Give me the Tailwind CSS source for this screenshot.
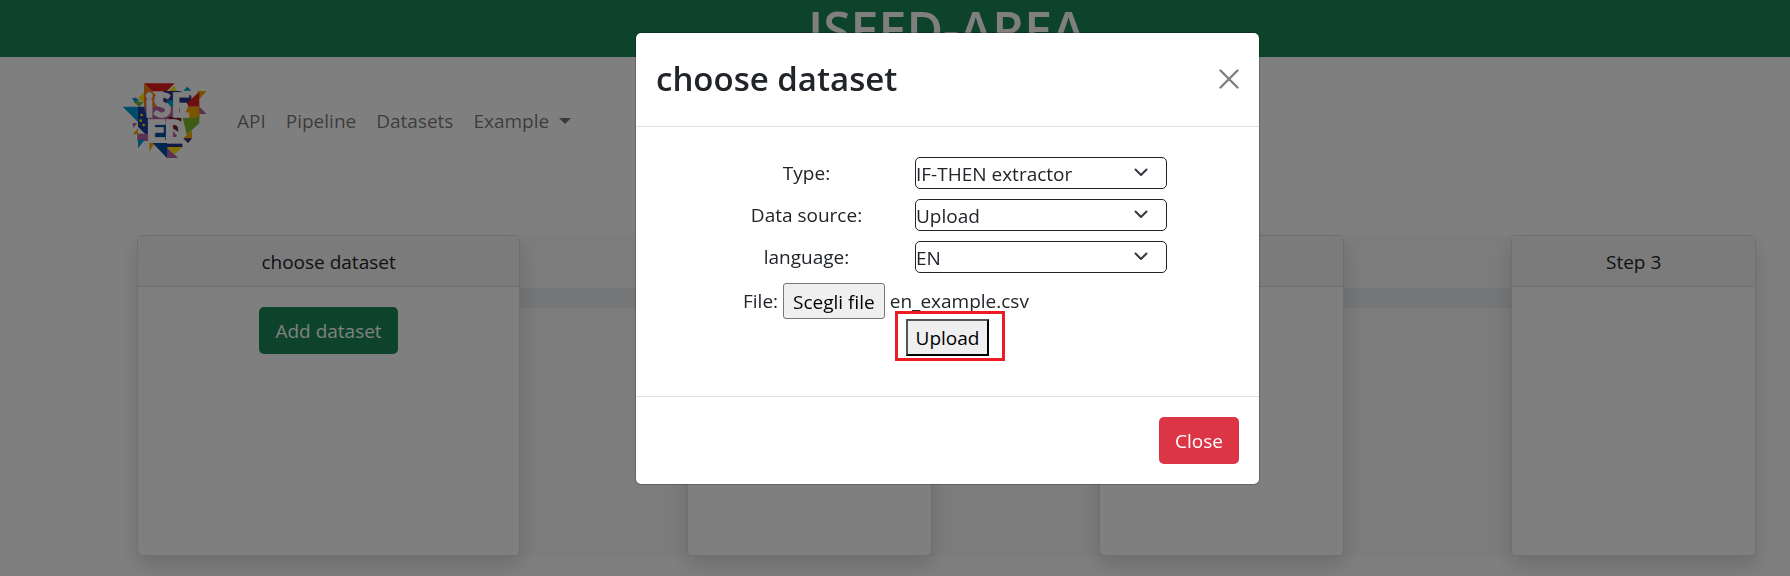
<!DOCTYPE html>
<html lang="en">
<head>
<meta charset="utf-8">
<meta name="viewport" content="width=device-width, initial-scale=1">
<title>ISEED-AREA</title>
<script src="https://cdn.jsdelivr.net/npm/@tailwindcss/browser@4"></script>
</head>
<body class="min-h-screen overflow-hidden bg-white font-['Open_Sans','Noto_Sans',sans-serif] text-[19px] leading-[30px] text-[#212529]">

<header class="h-[57px] overflow-hidden bg-[#198754] pl-[103px] text-center">
  <h1 class="text-[50px] leading-[58px] font-semibold text-white">ISEED-AREA</h1>
</header>

<nav class="flex items-center pt-[22px] pl-[122px] text-black/55" aria-label="Main">
  <a href="#" aria-label="iSEED home" class="mr-[30px] block">
    <svg class="h-[84px] w-[85px]" viewBox="66 56 255 252" aria-hidden="true">
      <path fill="#e71d1d" d="M132 69h92l-24 24h-44z"/>
      <path fill="#f08019" d="M132 69v70h46v-24z"/>
      <path fill="#ffe600" d="M224 76l-24 22 32 6z"/>
      <path fill="#0099d8" d="M262 79l12 12h-24zM96 114l12-2 10 10-14 4z"/>
      <path fill="#b9609f" d="M220 96l10-6v6z"/>
      <path fill="#2b3086" d="M190 92h48l36 14v26h-84z"/>
      <path fill="#f5aa00" d="M292 92h28l-22 24z"/>
      <path fill="#e0201b" d="M298 94v45h-34v-14z"/>
      <path fill="#ffe600" d="M132 96v30l-18-12z"/>
      <path fill="#7cb92b" d="M100 124h32l-14 16z"/>
      <path fill="#0099d8" d="M68 139h46v46zM200 120h40v30h-40z"/>
      <path fill="#1d3b94" d="M114 139h30v90l-30-30z"/>
      <path fill="#b9609f" d="M130 139h110v46H150zM298 139l22 22h-30z"/>
      <path fill="#f5aa00" d="M264 139h34v34h-50z"/>
      <path fill="#7cb92b" d="M298 163v26l-38 34-12-50h38z"/>
      <path fill="#7a1a2b" d="M206 170h38v50l-38-24z"/>
      <path fill="#b9609f" d="M206 196l30 36h-30zM98 188h14l-12 14zM112 220h36v22h-36z"/>
      <path fill="#f5aa00" d="M98 222l16-18v18zM148 248h16l-16 26z"/>
      <path fill="#0099d8" d="M114 238h20l-20 26z"/>
      <path fill="#004f9f" d="M158 190h40v50h-40zM158 248h43v45z"/>
      <path fill="#b9609f" d="M201 262v31h34z"/>
      <path fill="#2b3086" d="M201 250h46v12h-46z"/>
      <path fill="#ffe600" d="M201 260h46l-22 22z"/>
      <path fill="#f5aa00" d="M250 234l26-24v24l-12 14z"/>
      <path fill="#2b3086" d="M250 234h26l-12 14z"/>
      <g fill="#ffe600"><circle cx="125" cy="164" r="4"/><circle cx="122" cy="181" r="4"/><circle cx="131" cy="194" r="4"/></g>
      <g fill="#fff" stroke="#fff" stroke-width="4" font-weight="900">
        <text x="136" y="169" font-size="96" font-family="Lato, sans-serif">iSE</text>
        <text x="141" y="246" font-size="96" font-family="Roboto, sans-serif">ED</text>
      </g>
    </svg>
  </a>
  <div class="flex items-center gap-[20px]">
    <a href="#">API</a>
    <a href="#">Pipeline</a>
    <a href="#">Datasets</a>
    <a href="#" class="flex items-center gap-[10px]">Example
      <svg class="h-[6px] w-[12px]" viewBox="0 0 12 6" aria-hidden="true"><path fill="currentColor" d="M0 0h12L6 6z"/></svg>
    </a>
  </div>
</nav>

<main class="mt-[72px] pr-[34px] pl-[137px]">
  <div class="flex h-[321px] bg-[#f8f9fa]">
    <section class="relative z-10 flex flex-[383] flex-col rounded-[5px] border border-[#dfdfdf] bg-white text-center shadow-[0_10px_20px_rgba(0,0,0,0.15)]">
      <h2 class="border-b border-[#dfdfdf] bg-[#f7f7f7] pt-[11px] pb-[9px]">choose dataset</h2>
      <div class="pt-[20px]">
        <button type="button" class="h-[47px] rounded-[5px] bg-[#198754] px-[16px] text-white">Add dataset</button>
      </div>
    </section>
    <div class="flex-[168] pt-[53px]"><div class="h-[20px] bg-[#e9ecef]"></div></div>
    <section class="relative z-10 flex-[244] rounded-[5px] border border-[#dfdfdf] bg-white text-center shadow-[0_10px_20px_rgba(0,0,0,0.15)]">
      <h2 class="border-b border-[#dfdfdf] bg-[#f7f7f7] pt-[11px] pb-[9px]">Step 1</h2>
    </section>
    <div class="flex-[168] pt-[53px]"><div class="h-[20px] bg-[#e9ecef]"></div></div>
    <section class="relative z-10 flex-[244] rounded-[5px] border border-[#dfdfdf] bg-white text-center shadow-[0_10px_20px_rgba(0,0,0,0.15)]">
      <h2 class="border-b border-[#dfdfdf] bg-[#f7f7f7] pt-[11px] pb-[9px]">Step 2</h2>
    </section>
    <div class="flex-[168] pt-[53px]"><div class="h-[20px] bg-[#e9ecef]"></div></div>
    <section class="relative z-10 flex-[244] rounded-[5px] border border-[#dfdfdf] bg-white text-center shadow-[0_10px_20px_rgba(0,0,0,0.15)]">
      <h2 class="border-b border-[#dfdfdf] bg-[#f7f7f7] pt-[11px] pb-[9px]">Step 3</h2>
    </section>
  </div>
</main>

<div class="fixed inset-0 z-20 flex items-start justify-center bg-black/50 pt-[32px] pl-[105px]">
  <div role="dialog" aria-modal="true" aria-labelledby="dialog-title" class="w-full max-w-[625px] rounded-[6px] border border-black/20 bg-white bg-clip-padding">
    <div class="flex items-center justify-between border-b border-[#dee2e6] px-[20px] pt-[20px] pb-[21px]">
      <h2 id="dialog-title" class="text-[33px] leading-[52px] font-semibold">choose dataset</h2>
      <button type="button" aria-label="Close dialog" class="text-black/50">
        <svg class="size-[20px]" viewBox="0 0 20 20" fill="none" stroke="currentColor" stroke-width="2.4" stroke-linecap="round" aria-hidden="true"><path d="M1.5 1.5l17 17M18.5 1.5l-17 17"/></svg>
      </button>
    </div>
    <form class="pt-[30px] pb-[40px]" onsubmit="return false">
      <div class="grid grid-cols-[1fr_252px] gap-y-[10px] pr-[92px] pl-[62px]">
        <label for="type" class="text-center leading-[32px]">Type:</label>
        <div class="relative">
          <select id="type" class="block h-[32px] w-full appearance-none rounded-[5px] border border-[#212529] bg-white pt-[1px]"><option>IF-THEN extractor</option></select>
          <svg class="pointer-events-none absolute top-[11px] right-[19px] h-[9px] w-[14px]" viewBox="0 0 14 9" fill="none" stroke="#343a40" stroke-width="2" stroke-linecap="round" stroke-linejoin="round" aria-hidden="true"><path d="M1.500 1.500l5.500 5.500 5.500-5.500"/></svg>
        </div>
        <label for="source" class="text-center leading-[32px]">Data source:</label>
        <div class="relative">
          <select id="source" class="block h-[32px] w-full appearance-none rounded-[5px] border border-[#212529] bg-white pt-[1px]"><option>Upload</option></select>
          <svg class="pointer-events-none absolute top-[11px] right-[19px] h-[9px] w-[14px]" viewBox="0 0 14 9" fill="none" stroke="#343a40" stroke-width="2" stroke-linecap="round" stroke-linejoin="round" aria-hidden="true"><path d="M1.500 1.500l5.500 5.500 5.500-5.500"/></svg>
        </div>
        <label for="language" class="text-center leading-[32px]">language:</label>
        <div class="relative">
          <select id="language" class="block h-[32px] w-full appearance-none rounded-[5px] border border-[#212529] bg-white pt-[1px]"><option>EN</option></select>
          <svg class="pointer-events-none absolute top-[11px] right-[19px] h-[9px] w-[14px]" viewBox="0 0 14 9" fill="none" stroke="#343a40" stroke-width="2" stroke-linecap="round" stroke-linejoin="round" aria-hidden="true"><path d="M1.500 1.500l5.500 5.500 5.500-5.500"/></svg>
        </div>
      </div>
      <div class="mt-[10px] flex items-center gap-[5px] pl-[107px]">
        <span>File:</span>
        <label for="file" class="h-[36px] rounded-[3px] border border-[#767676] bg-[#efefef] px-[9px] leading-[36px] text-black">Scegli file</label>
        <input id="file" type="file" class="sr-only">
        <span>en_example.csv</span>
      </div>
      <div class="flex justify-center">
        <div class="relative">
          <button type="submit" class="block h-[37px] border-2 border-t-[#555] border-r-black border-b-black border-l-[#555] bg-[#efefef] px-[8px] text-black">Upload</button>
          <div class="pointer-events-none absolute -top-[8px] -right-[16px] -bottom-[5px] -left-[11px] border-3 border-[#ed1c24]"></div>
        </div>
      </div>
    </form>
    <div class="flex justify-end border-t border-[#dee2e6] p-[20px]">
      <button type="button" class="h-[47px] rounded-[5px] bg-[#dc3545] px-[16px] text-white">Close</button>
    </div>
  </div>
</div>
</body>
</html>
